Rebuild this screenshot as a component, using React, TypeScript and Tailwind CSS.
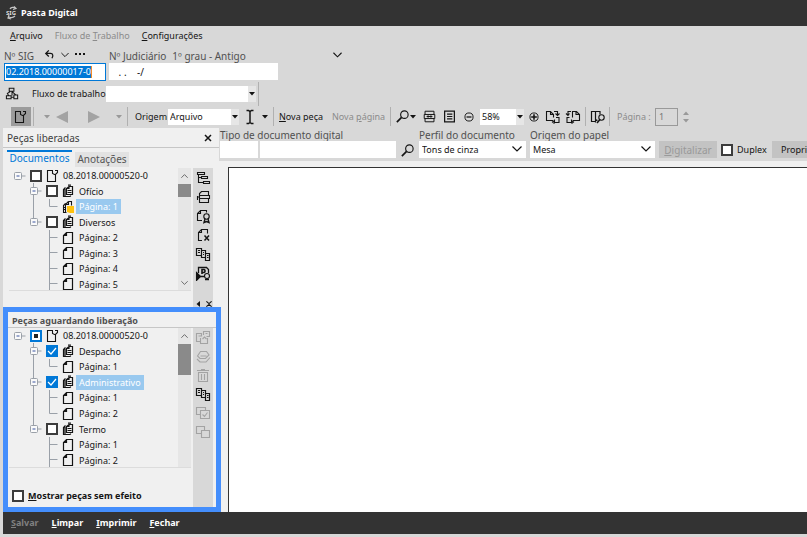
import type { ReactNode } from 'react';

type IconProps = { children: ReactNode; className?: string; size?: string };

function Icon({ children, className = '', size = 'size-4' }: IconProps) {
  return (
    <svg
      viewBox="0 0 16 16"
      fill="none"
      stroke="currentColor"
      strokeWidth="1.1"
      className={`shrink-0 ${size} ${className}`}
      aria-hidden="true"
    >
      {children}
    </svg>
  );
}

const DocRoot = () => (
  <svg viewBox="0 0 14 14" className="size-[14px] shrink-0" fill="none" stroke="currentColor" strokeWidth="1.1" aria-hidden="true">
    <path d="M7 1.500H1.500v11h8V8" />
    <path d="M6.500 1.500v3l2 1h1l2-2v-2H9M9.500 5.500V8" />
  </svg>
);
const Page = () => (
  <svg viewBox="0 0 14 14" className="size-[14px] shrink-0" fill="none" stroke="currentColor" strokeWidth="1.2" aria-hidden="true">
    <path d="M4.500 1.500h6v11h-9v-8zM4.500 1.500v3h-3" />
  </svg>
);
const Pages = () => (
  <svg viewBox="0 0 14 14" className="size-[14px] shrink-0" fill="none" stroke="currentColor" strokeWidth="1.2" aria-hidden="true">
    <path d="M3.500 3.500l-2 2v7h7M7 2.500h3.500v8h-6v-6zM7 2.500v2H5M6 1.200h3M3 5v7M8.500 11.500v1" />
    <path d="M5.500 6.500h4M5.500 8.500h4" />
  </svg>
);
const PageNote = () => (
  <svg viewBox="0 0 14 14" className="size-[14px] shrink-0" fill="none" stroke="currentColor" strokeWidth="1.1" aria-hidden="true">
    <path d="M3.500 3.500l-2 2v7h3M6.500 1.500h3v4M6.500 1.500l-3 3v8M6.500 1.500v3h-3M2 7.500h2M2 9.500h2" />
    <path d="M5 6h7v7H8l-3-1z" fill="#ffc20e" stroke="none" />
  </svg>
);
const Magnifier = () => (
  <Icon size="size-[15px]">
    <circle cx="10" cy="6" r="4" strokeWidth="1.2" />
    <path d="M7 9l-5 5" strokeWidth="1.8" />
  </Icon>
);
const Caret = ({ className = '' }: { className?: string }) => (
  <svg viewBox="0 0 6 4" className={`h-[4px] w-[6px] shrink-0 ${className}`} fill="currentColor" aria-hidden="true">
    <path d="M0 0h6L3 3.500z" />
  </svg>
);
const Chevron = ({ className = 'w-[10px]' }: { className?: string }) => (
  <svg viewBox="0 0 10 6" className={`h-[6px] shrink-0 ${className}`} fill="none" stroke="currentColor" strokeWidth="1.2" aria-hidden="true">
    <path d="M.5.5L5 5 9.500.5" />
  </svg>
);

function IconButton({ label, children, disabled, className = '' }: { label: string; children: ReactNode; disabled?: boolean; className?: string }) {
  return (
    <button type="button" aria-label={label} disabled={disabled} className={`flex shrink-0 items-center justify-center disabled:text-[#a3a3a3] ${className}`}>
      {children}
    </button>
  );
}

function ClassicSelect({ id, label, options, className }: { id: string; label?: string; options: string[]; className: string }) {
  return (
    <span className={`relative flex h-4 shrink-0 bg-white ${className}`}>
      <select id={id} aria-label={label} className="w-full appearance-none bg-white px-0.5">
        {options.map((o) => (
          <option key={o}>{o}</option>
        ))}
      </select>
      <span className="pointer-events-none absolute inset-y-0 right-0 flex w-2 items-center justify-center bg-[#e6e6e6]">
        <Caret />
      </span>
    </span>
  );
}

function FieldSelect({ id, label, value, className }: { id: string; label: string; value: string; className: string }) {
  return (
    <div className={`shrink-0 ${className}`}>
      <label htmlFor={id} className="block h-[12px] leading-[12px] text-[#505050]">{label}</label>
      <span className="relative flex h-[17px]">
        <select id={id} className="w-full appearance-none bg-white px-[3px] text-[9px]">
          <option>{value}</option>
        </select>
        <Chevron className="pointer-events-none absolute top-[5px] right-[4px] w-[10px]" />
      </span>
    </div>
  );
}

type CheckState = 'off' | 'on' | 'mixed';

function Tick({ state, label, id }: { state: CheckState; label?: string; id?: string }) {
  return (
    <span className="grid size-[12px] shrink-0">
      <input
        id={id}
        type="checkbox"
        aria-label={label}
        defaultChecked={state === 'on'}
        className={`col-start-1 row-start-1 size-[12px] appearance-none ${
          state === 'on' ? 'bg-[#0078d7]' : state === 'mixed' ? 'border-2 border-[#0078d7] bg-white' : 'border-2 border-[#3c3c3c] bg-white'
        }`}
      />
      {state === 'on' && (
        <svg viewBox="0 0 12 12" className="pointer-events-none col-start-1 row-start-1 size-[12px]" fill="none" stroke="white" strokeWidth="1.2">
          <path d="M2 6l3 3 5-6" />
        </svg>
      )}
      {state === 'mixed' && <span className="pointer-events-none col-start-1 row-start-1 m-auto size-[4px] bg-[#222]" />}
    </span>
  );
}

type Row = {
  kind: 'root' | 'folder' | 'page';
  text: string;
  check?: CheckState;
  selected?: boolean;
  last?: boolean;
  trunk?: boolean;
};

const liberadas: Row[] = [
  { kind: 'root', text: '08.2018.00000520-0', check: 'off' },
  { kind: 'folder', text: 'Ofício', check: 'off' },
  { kind: 'page', text: 'Página: 1', selected: true, last: true, trunk: true },
  { kind: 'folder', text: 'Diversos', check: 'off', last: true },
  { kind: 'page', text: 'Página: 2' },
  { kind: 'page', text: 'Página: 3' },
  { kind: 'page', text: 'Página: 4' },
  { kind: 'page', text: 'Página: 5' },
];

const aguardando: Row[] = [
  { kind: 'root', text: '08.2018.00000520-0', check: 'mixed' },
  { kind: 'folder', text: 'Despacho', check: 'on' },
  { kind: 'page', text: 'Página: 1', last: true, trunk: true },
  { kind: 'folder', text: 'Administrativo', check: 'on', selected: true },
  { kind: 'page', text: 'Página: 1', trunk: true },
  { kind: 'page', text: 'Página: 2', last: true, trunk: true },
  { kind: 'folder', text: 'Termo', check: 'off', last: true },
  { kind: 'page', text: 'Página: 1' },
  { kind: 'page', text: 'Página: 2' },
];

function Guides({ row }: { row: Row }) {
  const box = (x: number) => (
    <>
      <rect x={x} y="4.500" width="7" height="7" rx="1" fill="#fafafa" />
      <path d={`M${x + 2} 8h3`} stroke="#3a55a0" />
      <path d={`M${x + 7} 8h4`} />
    </>
  );
  if (row.kind === 'root') {
    return (
      <svg viewBox="0 0 21 16" className="h-4 w-[21px] shrink-0" fill="none" stroke="#9aa0a8" aria-hidden="true">
        {box(5.5)}
      </svg>
    );
  }
  if (row.kind === 'folder') {
    return (
      <svg viewBox="0 0 37 16" className="h-4 w-[37px] shrink-0" fill="none" stroke="#9aa0a8" aria-hidden="true">
        <path d={row.last ? 'M24.500 0v5' : 'M24.500 0v16'} />
        {box(21.5)}
      </svg>
    );
  }
  return (
    <svg viewBox="0 0 53 16" className="h-4 w-[53px] shrink-0" fill="none" stroke="#9aa0a8" aria-hidden="true">
      {row.trunk && <path d="M24.500 0v16" />}
      <path d={row.last ? 'M40.500 0v7.500h8' : 'M40.500 0v16M40.500 7.500h8'} />
    </svg>
  );
}

function Tree({ rows, className, label }: { rows: Row[]; className: string; label: string }) {
  return (
    <ul aria-label={label} className={`grid shrink-0 auto-rows-fr text-[9px] ${className}`}>
      {rows.map((row, i) => (
        <li key={i} className="flex min-h-0 items-center overflow-visible whitespace-nowrap">
          <Guides row={row} />
          {row.check && <Tick state={row.check} label={row.text} />}
          <span className={row.kind === 'page' ? '' : 'ml-[4px]'}>
            {row.kind === 'root' ? <DocRoot /> : row.kind === 'folder' ? <Pages /> : row.selected ? <PageNote /> : <Page />}
          </span>
          <span className={`h-[15px] px-[3px] leading-[15px] ${row.selected ? 'bg-[#99c9ef] text-white' : ''}`}>{row.text}</span>
        </li>
      ))}
    </ul>
  );
}

function Scroller({ thumb, down }: { thumb: string; down?: boolean }) {
  return (
    <div className="flex w-[13px] shrink-0 flex-col items-center bg-[#e6e6e6] text-[#555]">
      <div className="flex h-[16px] shrink-0 items-center">
        <Chevron className="w-[7px] rotate-180" />
      </div>
      <div className={`w-full bg-[#8a8a8a] ${thumb}`} />
      {down && (
        <div className="mt-auto flex h-[15px] items-center">
          <Chevron className="w-[7px]" />
        </div>
      )}
    </div>
  );
}

const copyArt = <path d="M1.500 2.500h5v7h-5zM6.500 4.500h4v7h-4zM10.500 7.500h4v7h-4zM3 4.500h2M3 6.500h2M8 6.500h1M8 8.500h1M12 9.500h1.500M12 11.500h1.500" strokeWidth="1.2" />;

const topTools: [string, ReactNode][] = [
  ['Árvore', <path d="M2.500 2.500h7v2h-7zM6.500 6.500h6v2h-6zM8.500 11.500h6v2h-6zM3.500 5v7.500h5M3.500 7.500h3" />],
  ['Digitalizar', <path d="M4.500 6.500v-2l2-2h7v4M2.500 7v4M4.500 6.500h10v3h-10zM2.500 8h2M4.500 9.500v4h9v-4" />],
  ['Certificar', <><path d="M7 12.500H2.500v-7l3-3h6v2M5.500 2.500v3h-3" /><circle cx="11.500" cy="8.500" r="2.700" /><path d="M10 11l-1 3.500 2.500-1 2.500 1-1-3.500" strokeWidth="1.400" /></>],
  ['Excluir página', <><path d="M7 13.500H3.500v-8l3-3h6v4M6.500 2.500v3h-3" /><path d="M9.500 8.500l4.500 5M14 8.500l-4.500 5" strokeWidth="1.500" /></>],
  ['Copiar peças', copyArt],
  ['Publicar', <><path d="M3.500 8V2.500h8l2 2V8" strokeWidth="1.300" /><path d="M7 9V4.500h2a1.600 1.600 0 010 3H7" strokeWidth="1.600" /><path d="M1.500 7.500l4 4-4 4z" fill="currentColor" /><circle cx="12" cy="11" r="2.500" /><path d="M4 11.500h5M10 14.500h4" strokeWidth="1.500" /></>],
];

const bottomTools: [string, boolean, ReactNode][] = [
  ['Mover', true, <path d="M5.500 12.500h-4v-8h5v3M8.500 6V2.500h6v5h-3M5.500 9v5.500h7V11M3.500 7h3M10.500 4.500h2M7.500 10l2-2 2 2M12.500 9v5.500" />],
  ['Apagar', true, <path d="M2.500 8l3-4.500h6L14 7l-3.500 3.500H5zM2 11l3 3h6l4-4.500M5.500 8h6" />],
  ['Lixeira', true, <path d="M2 3.500h12M3.500 5.500v9h9v-9zM6 2.500h4M6.500 7v6M9.500 7v6" />],
  ['Copiar', false, copyArt],
  ['Marcar', true, <path d="M5.500 9.500h-4v-7h9v3M5.500 5.500h9v8h-9zM7.500 9.500l2 2 3-4" />],
  ['Desmarcar', true, <path d="M6.500 9.500h-5v-7h8v4M6.500 6.500h8v7h-8z" />],
];

const Divider = ({ className = 'h-[19px]' }: { className?: string }) => <span className={`w-px shrink-0 bg-[#b0b0b0] ${className}`} />;

export default function App() {
  return (
    <div className="flex min-h-screen flex-col overflow-hidden bg-[#d8d8d8] font-['Noto_Sans','Open_Sans',sans-serif] text-[10px] leading-[12px] text-[#141414]">
      <header className="flex h-[26px] items-center gap-[3px] bg-[#333] pl-[6px] text-white">
        <svg viewBox="0 0 12 14" className="h-[14px] w-[12px]" fill="none" stroke="#c4c4c4" aria-hidden="true">
          <path d="M4 3c1-2 4-2 5-1M8 .5l2 2-3 1M9 10c-2 2-4 2-6 1M3 9l-1 3 3 1" strokeWidth="1.200" />
          <text x="0" y="8.500" fontSize="6" fontWeight="700" fill="#ddd" stroke="none">SIG</text>
        </svg>
        <h1 className="text-[9px] font-bold">Pasta Digital</h1>
      </header>

      <nav className="flex h-[19px] items-center gap-[12px] pl-[10px] text-[9px]" aria-label="Menu principal">
        <button type="button"><u>A</u>rquivo</button>
        <button type="button" disabled className="text-[#8b8b8b]">Fluxo de <u>T</u>rabalho</button>
        <button type="button"><u>C</u>onfigurações</button>
      </nav>

      <section className="flex h-[36px] pt-px pl-[4px]">
        <div className="w-[105px] shrink-0">
          <div className="flex h-[17px] items-center pt-[3px]">
            <label htmlFor="sig" className="w-[40px] text-[#505050]">Nº SIG</label>
            <div className="flex items-center gap-[6px] pb-[3px]">
              <IconButton label="Voltar">
                <Icon size="size-[11px]"><path d="M7 2L2.500 6.500 7 11M2.500 6.500h7c4 0 4 4 2 7" strokeWidth="1.800" /></Icon>
              </IconButton>
              <IconButton label="Abrir lista"><Chevron className="w-[8px]" /></IconButton>
              <IconButton label="Mais opções">
                <svg viewBox="0 0 10 3" className="h-[3px] w-[10px]" fill="currentColor"><path d="M0 0h2v2H0zM4 0h2v2H4zM8 0h2v2H8z" /></svg>
              </IconButton>
            </div>
          </div>
          <div className="flex h-[18px] w-[102px] items-center border border-[#0078d7] bg-white">
            <input id="sig" defaultValue="02.2018.00000017-0" className="ml-px h-[12px] w-[86px] border-r border-[#f28c28] bg-[#0078d7] text-[9px] text-white" />
          </div>
        </div>
        <div className="w-[169px] shrink-0">
          <div className="flex h-[17px] items-center gap-[6px] pt-[3px] whitespace-nowrap text-[#505050]">
            <label htmlFor="jud">Nº Judiciário</label>
            <span>1º grau - Antigo</span>
          </div>
          <input id="jud" defaultValue=" . .    -/" className="h-[17px] w-full bg-white px-[7px]" />
        </div>
        <IconButton label="Grau do processo" className="mt-[6px] ml-[55px] h-[6px]"><Chevron className="w-[9px]" /></IconButton>
      </section>

      <section className="flex h-[25px] items-center pl-[5px] text-[9px] whitespace-nowrap">
        <Icon className="mr-[12px]" size="size-[15px]"><path d="M4.500 2.500h5v3h-5zM1.500 10.500h5v3h-5zM9.500 9.500h4v4h-4zM4 10.500L2.500 8l3-2M7.500 6l4 3.500M6.500 12h3M7.500 10V6" /></Icon>
        <label htmlFor="fluxo" className="w-[74px]">Fluxo de trabalho</label>
        <ClassicSelect id="fluxo" options={['']} className="w-[150px]" />
        <Divider className="ml-[2px] h-[24px]" />
      </section>

      <section className="flex h-[21px] items-center pl-[11px] text-[9px] whitespace-nowrap" aria-label="Ferramentas">
        <IconButton label="Documento" className="h-[19px] w-[20px] bg-[#9b9b9b]"><DocRoot /></IconButton>
        <Divider className="ml-[2px] h-[19px]" />
        <Caret className="ml-[10px] text-[#999]" />
        <IconButton label="Anterior" disabled className="ml-[6px]">
          <svg viewBox="0 0 12 12" className="size-[12px]" fill="currentColor"><path d="M12 0v12L0 6z" /></svg>
        </IconButton>
        <IconButton label="Próxima" disabled className="ml-[20px]">
          <svg viewBox="0 0 12 12" className="size-[12px]" fill="currentColor"><path d="M0 0v12l12-6z" /></svg>
        </IconButton>
        <Caret className="ml-[16px] text-[#999]" />
        <Divider className="ml-[5px] h-[19px]" />
        <label htmlFor="origem" className="ml-[7px] w-[33px]">Origem</label>
        <ClassicSelect id="origem" options={['Arquivo']} className="w-[71px]" />
        <IconButton label="Texto" className="ml-[3px]">
          <Icon><path d="M4.500 1.500h2l1.500 1 1.500-1h2M8 2.500v11M4.500 14.500h2l1.500-1 1.500 1h2" strokeWidth="1.500" /></Icon>
        </IconButton>
        <Caret className="ml-[4px]" />
        <Divider className="ml-[5px] h-[19px]" />
        <button type="button" className="ml-[5px] w-[47px] text-left"><u>N</u>ova peça</button>
        <button type="button" disabled className="ml-[6px] w-[54px] text-left text-[#8b8b8b]">Nova <u>p</u>ágina</button>
        <Divider className="ml-[4px] h-[19px]" />
        <IconButton label="Localizar" className="ml-[4px]"><Magnifier /></IconButton>
        <Caret />
        <IconButton label="Ajustar à largura" className="ml-[7px]">
          <Icon size="size-[13px]"><path d="M2.500 5.500v-4h11v4M2.500 10.500v4h11v-4M1.500 5.500h13v5h-13zM5 8h6M6.500 6.500L5 8l1.500 1.500M9.500 6.500L11 8 9.500 9.500" strokeWidth="1.200" /></Icon>
        </IconButton>
        <IconButton label="Página inteira" className="ml-[7px]">
          <Icon size="size-[13px]"><path d="M2 1.500h12v13H2zM5 5h6.500M5 8h6.500M5 11h6.500" strokeWidth="1.500" /></Icon>
        </IconButton>
        <IconButton label="Reduzir" className="ml-[8px]">
          <Icon size="size-[10px]"><circle cx="8" cy="8" r="6.500" strokeWidth="1.500" /><path d="M4 8h8" strokeWidth="2" /></Icon>
        </IconButton>
        <ClassicSelect id="zoom" label="Zoom" options={['58%']} className="ml-[6px] w-[44px]" />
        <IconButton label="Ampliar" className="ml-[5px]">
          <Icon size="size-[10px]"><circle cx="8" cy="8" r="6.500" strokeWidth="1.500" /><path d="M3.500 8h9M8 3.500v9" strokeWidth="2.500" /></Icon>
        </IconButton>
        <IconButton label="Girar à direita" className="ml-[6px]">
          <Icon><path d="M8 11.500H1.500v-9h4l3 3v3M5.500 2.500v3h3M9 2.500h3.500v3M10.500 4.500l2 2 2-2M11 8.500h3v5H9.500v-3M9.500 11.500l-2 1.500 2 1.500" /></Icon>
        </IconButton>
        <IconButton label="Girar à esquerda" className="ml-[4px]">
          <Icon><path d="M8 11.500h6.500v-6l-3-3h-4v6M11 2.500v3h3.500M6 2.500H3v3M1 4.500l2 2 1.500-2M4.500 8.500H2v5h4.500v-3M6.500 11.500l2 1.500-2 1.500" /></Icon>
        </IconButton>
        <Divider className="ml-[4px] h-[19px]" />
        <IconButton label="Pesquisar documento" className="ml-[4px]">
          <Icon><path d="M5 12.500H1.500v-10H10v3M5.500 2.500v8l2 1M5.500 10.500v3" strokeWidth="1.200" /><circle cx="11.500" cy="8.500" r="2.700" /><path d="M10 10.500l-3 3.500" strokeWidth="1.500" /></Icon>
        </IconButton>
        <Divider className="ml-[3px] h-[19px]" />
        <label htmlFor="pag" className="ml-[7px] w-[38px] text-[#8b8b8b]">Página :</label>
        <input id="pag" defaultValue="1" disabled className="h-[18px] w-[23px] border border-[#999] px-[3px] text-[#777]" />
        <span className="ml-[5px] flex flex-col gap-[4px] text-[#999]"><Caret className="rotate-180" /><Caret /></span>
      </section>

      <main className="flex flex-1 pt-[1px] pl-[3px]">
        <aside className="flex w-[216px] shrink-0 flex-col bg-[#f0f0f0]">
          <div className="flex h-[20px] items-center justify-between border-b border-[#c6c6c6] pr-[7px] pl-[4px]">
            <h2 className="text-[#404040]">Peças liberadas</h2>
            <IconButton label="Fechar painel">
              <Icon size="size-[8px]"><path d="M2 2l12 12M14 2L2 14" strokeWidth="3" /></Icon>
            </IconButton>
          </div>
          <div className="flex h-[20px] items-end gap-[3px] pl-[4px]" role="tablist">
            <button type="button" role="tab" aria-selected="true" className="h-[18px] w-[65px] border-t-2 border-[#0078d7] pb-[5px] text-[#0078d7]">Documentos</button>
            <button type="button" role="tab" aria-selected="false" className="mb-px h-[15px] w-[54px] bg-[#e2e2e2] pb-[2px] text-[#555]">Anotações</button>
          </div>
          <div className="flex flex-1 pr-[6px] pl-[6px]">
            <div className="mr-[2px] flex h-[123px] flex-1 overflow-hidden border-b border-[#dcdcdc]">
              <Tree rows={liberadas} label="Peças liberadas" className="h-[124px] w-[169px]" />
              <Scroller thumb="h-[13px]" down />
            </div>
            <div className="flex w-[20px] flex-col items-center bg-[#d8d8d8] pt-[2px]">
              <div className="flex flex-col gap-[3px]">
                {topTools.map(([label, art]) => (
                  <IconButton key={label} label={label}><Icon>{art}</Icon></IconButton>
                ))}
              </div>
              <div className="mt-auto flex h-[6px] items-center gap-[5px]">
                <Caret className="rotate-90" />
                <Icon size="size-[6px]"><path d="M1 1l7 6 7-6M1 15l7-6 7 6" strokeWidth="3" /></Icon>
              </div>
            </div>
          </div>

          <section className="relative flex h-[205px] w-[218px] shrink-0 flex-col border-5 border-[#448efc] bg-[#f0f0f0]">
            <h2 className="flex h-[16px] shrink-0 items-center border-b border-[#c6c6c6] px-[4px] pt-[2px] text-[9px] font-bold text-[#505050]">Peças aguardando liberação</h2>
            <div className="flex flex-1 pr-[3px] pl-[1px]">
              <div className="flex flex-1 flex-col">
                <div className="mr-[2px] flex h-[140px] shrink-0 overflow-hidden border-b border-[#dcdcdc]">
                  <Tree rows={aguardando} label="Peças aguardando liberação" className="h-[140px] w-[169px]" />
                  <Scroller thumb="h-[31px]" />
                </div>
                <label htmlFor="mostrar" className="mt-[22px] flex items-center gap-[4px] pl-[3px] text-[9px] font-bold whitespace-nowrap">
                  <Tick state="off" id="mostrar" />
                  <span><u>M</u>ostrar peças sem efeito</span>
                </label>
              </div>
              <div className="flex w-[20px] flex-col items-center gap-[3px] bg-[#d8d8d8] pt-[1px]">
                {bottomTools.map(([label, disabled, art]) => (
                  <IconButton key={label} label={label} disabled={disabled}><Icon>{art}</Icon></IconButton>
                ))}
              </div>
            </div>
          </section>
        </aside>

        <div className="flex min-w-0 flex-1 flex-col">
          <div className="flex h-[33px] items-end gap-[4px] overflow-hidden pb-[3px] pl-[1px] whitespace-nowrap">
            <div className="w-[176px] shrink-0">
              <label htmlFor="tipo" className="block h-[12px] leading-[12px] text-[#505050]">Tipo de documento digital</label>
              <div className="flex h-[17px] gap-[2px]">
                <input id="tipo" className="w-[38px] bg-white px-1" />
                <input aria-label="Descrição do tipo" className="w-[136px] bg-white px-1" />
              </div>
            </div>
            <IconButton label="Buscar tipo"><Magnifier /></IconButton>
            <FieldSelect id="perfil" label="Perfil do documento" value="Tons de cinza" className="w-[107px]" />
            <FieldSelect id="papel" label="Origem do papel" value="Mesa" className="w-[125px]" />
            <button type="button" disabled className="h-[17px] w-[58px] shrink-0 bg-[#c3c3c3] text-[#999]"><u>D</u>igitalizar</button>
            <label htmlFor="duplex" className="flex h-[17px] w-[47px] shrink-0 items-center gap-[4px] text-[9px]">
              <Tick state="off" id="duplex" />
              Duplex
            </label>
            <button type="button" className="h-[17px] shrink-0 bg-[#c3c3c3] px-[9px] text-[9px]">Propriedades</button>
          </div>
          <div className="flex flex-1 bg-[#f0f0f0] pt-[6px] pl-[9px]">
            <div className="flex-1 border-t border-l border-[#333] bg-white" />
          </div>
        </div>
      </main>

      <footer className="mb-[3px] ml-[3px] flex h-[22px] items-center gap-[13px] bg-[#333] pl-[8px] text-[9px] font-bold text-white">
        <button type="button" disabled className="text-[#808080]"><u>S</u>alvar</button>
        <button type="button"><u>L</u>impar</button>
        <button type="button"><u>I</u>mprimir</button>
        <button type="button"><u>F</u>echar</button>
      </footer>
    </div>
  );
}
